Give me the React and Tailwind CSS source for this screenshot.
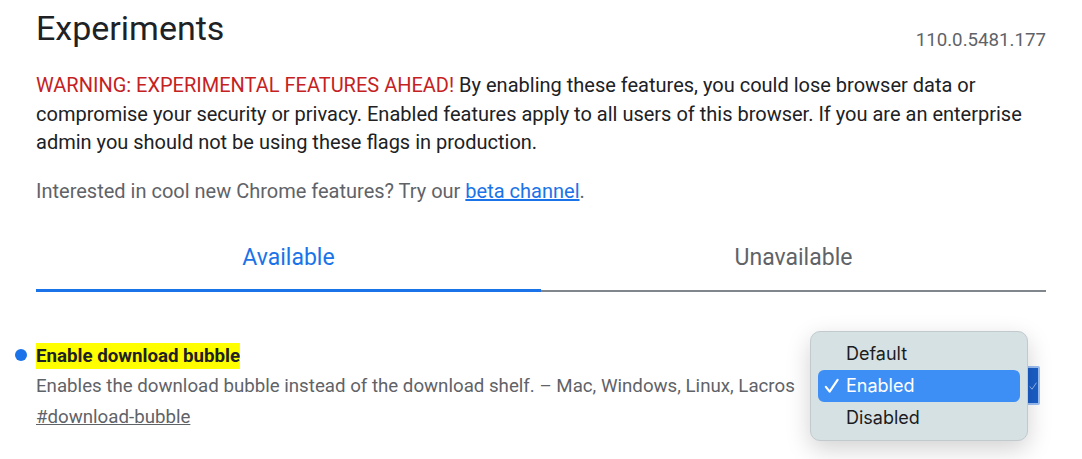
const ROBOTO = "font-['Roboto',_'Liberation_Sans',_sans-serif]";

function CheckMark({ className, width = "2" }) {
  return (
    <svg viewBox="0 0 16 16" fill="none" className={className}>
      <path d="M2 9.5 L6 14.5 L14.5 2" stroke="currentColor" strokeWidth={width} strokeLinecap="round" strokeLinejoin="round" />
    </svg>
  );
}

function Tabs() {
  return (
    <div className="mt-[37px] flex">
      <div className="flex-1 flex flex-col items-center">
        <span className="text-[23px] leading-[30px] text-[#1a73e8]">Available</span>
        <div className="mt-[16px] h-[3px] w-full bg-[#1a73e8]" />
      </div>
      <div className="flex-1 flex flex-col items-center">
        <span className="text-[23px] leading-[30px] text-[#5f6368]">Unavailable</span>
        <div className="mt-[17px] h-[2px] w-full bg-[#80868b]" />
      </div>
    </div>
  );
}

function OptionsPopup() {
  return (
    <div className="absolute left-[774px] top-[-12px] w-[218px] rounded-[10px] border border-[#c2cacd] bg-[#d6e1e4] px-[7px] py-[6px] shadow-[0_8px_24px_rgba(0,0,0,0.18)] font-['Inter',_'Noto_Sans',_sans-serif] text-[18px] text-[#1c1c1e]">
      <div className="h-[32px] flex items-center pl-[28px]">Default</div>
      <div className="h-[32px] flex items-center rounded-[6px] bg-[#3d8ff5] text-white relative pl-[28px]">
        <CheckMark className="absolute left-[6px] top-[8px] w-[15px] h-[15px]" width="2.3" />
        Enabled
      </div>
      <div className="h-[32px] flex items-center pl-[28px]">Disabled</div>
    </div>
  );
}

export default function App() {
  return (
    <div className={`w-[1082px] h-[459px] overflow-hidden bg-white ${ROBOTO}`}>
      <div className="mx-[36px] pt-[8px]">
        <div className="flex items-start justify-between">
          <h1 className="text-[34px] leading-[40px] text-[#202124]">Experiments</h1>
          <span className="mt-[20px] text-[18.7px] leading-[24px] text-[#5f6368]">110.0.5481.177</span>
        </div>

        <p className="mt-[19px] text-[20px] leading-[28.5px] text-[#202124]">
          <span className="text-[#c5221f]">WARNING: EXPERIMENTAL FEATURES AHEAD!</span> By enabling these features, you
          could lose browser data or compromise your security or privacy. Enabled features apply to all users of this
          browser. If you are an enterprise admin you should not be using these flags in production.
        </p>

        <p className="mt-[20.5px] text-[20px] leading-[28.5px] text-[#5f6368]">
          Interested in cool new Chrome features? Try our{" "}
          <a className="text-[#1a73e8] underline">beta channel</a>.
        </p>

        <Tabs />

        <div className="relative mt-[51px]">
          <div className="absolute left-[-21px] top-[6px] w-[12px] h-[12px] rounded-full bg-[#1a73e8]" />
          <div className="flex">
            <span className="bg-[#ffff00] font-bold text-[18.7px] leading-[26px] text-[#202124]">
              Enable download bubble
            </span>
          </div>
          <div className="mt-[3px] flex items-center justify-between">
            <p className="text-[18.7px] leading-[28px] text-[#5f6368]">
              Enables the download bubble instead of the download shelf. – Mac, Windows, Linux, Lacros
            </p>
            <div className="-my-[6px] h-[39px] w-[21px] mr-[6px] rounded-[2px] border-2 border-[#9cc0f5] bg-[#1a5fc8] flex items-center justify-end pr-[1px]">
              <CheckMark className="w-[8px] h-[8px] text-[#8fb3ea]" />
            </div>
          </div>
          <a className="block mt-[3px] text-[18.7px] leading-[28px] text-[#5f6368] underline">#download-bubble</a>
          <OptionsPopup />
        </div>
      </div>
    </div>
  );
}
